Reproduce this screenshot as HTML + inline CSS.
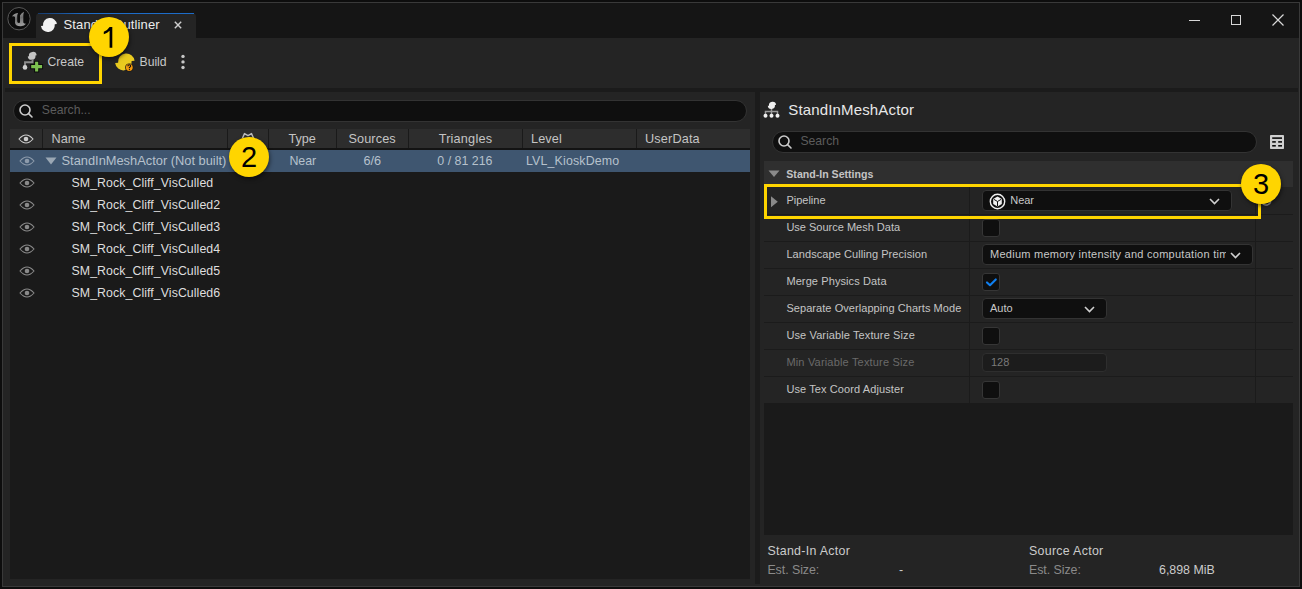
<!DOCTYPE html>
<html><head><meta charset="utf-8">
<style>
*{box-sizing:border-box;margin:0;padding:0}
html,body{width:1302px;height:589px;overflow:hidden;background:#0d0d0d;font-family:"Liberation Sans",sans-serif;color:#c0c0c0}
.a{position:absolute}
.t{position:absolute;white-space:nowrap;line-height:1}
.strip{position:absolute;background:#1b1b1b}
.search{position:absolute;background:#0f0f0f;border:1px solid #333333;border-radius:11px}
.hdr{position:absolute;top:129px;height:19px;background:#2d2d2d}
.hsep{position:absolute;top:129px;width:1px;height:19px;background:#1a1a1a}
.badge{position:absolute;width:40px;height:40px;border-radius:50%;background:#ffd500;color:#000;font-size:29px;text-align:center;line-height:41px;box-shadow:1px 2px 4px rgba(0,0,0,.5)}
.ybox{position:absolute;border:3px solid #ffd500}
.drow{position:absolute;left:764px;width:529px;height:27px;background:#242424}
.hl{position:absolute;left:764px;width:529px;height:1px;background:#1b1b1b}
.vsep{position:absolute;width:1px;background:#1b1b1b}
.cb{position:absolute;left:982px;width:18px;height:18px;background:#0f0f0f;border:1px solid #363636;border-radius:3px}
.combo{position:absolute;left:982px;height:21px;background:#0f0f0f;border:1px solid #333333;border-radius:4px}
</style></head><body>
<div class="a" style="left:2px;top:2px;width:1298px;height:585px;border:1px solid #393939;background:#242424"></div>
<div class="a" style="left:3px;top:3px;width:1296px;height:35px;background:#151515"></div>
<svg class="a" style="left:7px;top:6px" width="25" height="25" viewBox="0 0 25 25"><defs><linearGradient id="ug" x1="0" y1="0" x2="0.3" y2="1"><stop offset="0" stop-color="#a8a8a8"/><stop offset=".55" stop-color="#6e6e6e"/><stop offset="1" stop-color="#9a9a9a"/></linearGradient></defs><circle cx="12" cy="12.7" r="11.2" fill="#0b0b0b" stroke="#5a5a5a" stroke-width="1"/><path d="M5 10.5 Q6.5 7.5 10.5 7 L11 7.2 Q10 9 10.2 11 L10.2 15.5 Q10.5 17 12 17 L13 16.5 L13 9.5 Q14.5 7 17 5.8 Q16.3 8 16.3 10 L16.3 16.5 Q16.8 17.8 19 17.8 Q17.5 20 14 20.2 Q9 20.5 8 17 L8 11 Q7 10 5 10.5 Z" fill="url(#ug)"/></svg>
<div class="a" style="left:36px;top:13px;width:160px;height:25px;background:#242424;border-radius:4px 4px 0 0"></div>
<div class="a" style="left:38px;top:13px;width:156px;height:1px;background:linear-gradient(90deg,#173a6a,#1d6cc8 30%,#1d6cc8)"></div>
<svg class="a" style="left:0px;top:0px" width="70" height="40" viewBox="0 0 70 40"><path transform="rotate(-7 48.9 25.0)" d="M43.00 25.00 A6.95 6.95 0 0 1 56.90 25.00 L54.80 25.00 A6.95 6.95 0 0 1 40.90 25.00 Z" fill="#f2f2f2"/></svg>
<div class="t" style="left:63.5px;top:18.30px;font-size:13px;color:#ececec;letter-spacing:0.15px">StandIn Outliner</div>
<svg class="a" style="left:174px;top:20.5px" width="8" height="8" viewBox="0 0 8 8"><path d="M0.8 0.8 L7.2 7.2 M7.2 0.8 L0.8 7.2" stroke="#cfcfcf" stroke-width="1.4"/></svg>
<div class="a" style="left:1189px;top:20px;width:11px;height:1px;background:#d8d8d8"></div>
<div class="a" style="left:1231px;top:15px;width:10px;height:10px;border:1px solid #d8d8d8"></div>
<svg class="a" style="left:1272px;top:14px" width="12" height="12" viewBox="0 0 12 12"><path d="M0.5 0.5 L11.5 11.5 M11.5 0.5 L0.5 11.5" stroke="#d8d8d8" stroke-width="1.2"/></svg>
<div class="strip" style="left:5px;top:88px;width:1293px;height:4px"></div>
<svg class="a" style="left:22px;top:50px" width="23" height="24" viewBox="0 0 23 24"><path transform="rotate(-7 10.2 5.85)" d="M6.90 5.85 A3.9 3.9 0 0 1 14.70 5.85 L13.50 5.85 A3.9 3.9 0 0 1 5.70 5.85 Z" fill="#c4c4c4"/><path d="M10.5 9.5 L10.5 12.2 L3 12.2 L3 16.5" fill="none" stroke="#8c8c8c" stroke-width="1.9"/><circle cx="3" cy="17.4" r="2.3" fill="#d0d0d0"/><path d="M8.2 14.1 L12.1 14.1 L12.1 10.8 L17.2 10.8 L17.2 14.1 L21.1 14.1 L21.1 19.2 L17.2 19.2 L17.2 22.5 L12.1 22.5 L12.1 19.2 L8.2 19.2 Z" fill="#0b0b0b"/><path d="M9.2 15.1 L13.1 15.1 L13.1 11.8 L16.2 11.8 L16.2 15.1 L20.1 15.1 L20.1 18.2 L16.2 18.2 L16.2 21.5 L13.1 21.5 L13.1 18.2 L9.2 18.2 Z" fill="#7cc04f"/></svg>
<div class="t" style="left:47.5px;top:56.17px;font-size:12.2px;color:#c8c8c8;">Create</div>
<svg class="a" style="left:100px;top:45px" width="40" height="30" viewBox="100 45 40 30"><defs><linearGradient id="bg1" x1="0" y1="0" x2="1" y2="1"><stop offset="0" stop-color="#b89a10"/><stop offset=".3" stop-color="#e6c81e"/><stop offset="1" stop-color="#f0d023"/></linearGradient></defs><path transform="rotate(-7 124.85 61.9)" d="M118.05 61.90 A8.3 8.3 0 0 1 134.65 61.90 L131.65 61.90 A8.3 8.3 0 0 1 115.05 61.90 Z" fill="url(#bg1)"/><circle cx="129.3" cy="67.5" r="4.1" fill="#161616"/><circle cx="129.3" cy="67.5" r="3.4" fill="#f5980a"/><path d="M127.9 66.3 Q127.9 64.7 129.3 64.7 Q130.7 64.7 130.7 66 Q130.7 66.8 129.4 67.4 L129.4 68.3" fill="none" stroke="#111" stroke-width="1.1"/><circle cx="129.4" cy="69.6" r="0.65" fill="#111"/></svg>
<div class="t" style="left:139.5px;top:55.97px;font-size:12.2px;color:#c8c8c8;">Build</div>
<svg class="a" style="left:179px;top:53px" width="8" height="18" viewBox="0 0 8 18"><circle cx="4" cy="3.4" r="1.7" fill="#c8c8c8"/><circle cx="4" cy="8.9" r="1.7" fill="#c8c8c8"/><circle cx="4" cy="14.5" r="1.7" fill="#c8c8c8"/></svg>
<div class="search" style="left:13px;top:100px;width:734px;height:22px"></div>
<svg class="a" style="left:18px;top:103px" width="16" height="16" viewBox="0 0 16 16"><circle cx="7" cy="7" r="5" fill="none" stroke="#cccccc" stroke-width="1.6"/><path d="M10.6 10.6 L14 14" stroke="#cccccc" stroke-width="1.6" stroke-linecap="round"/></svg>
<div class="t" style="left:41.8px;top:104.07px;font-size:12.2px;color:#5c5c5c;">Search...</div>
<div class="hdr" style="left:10px;width:740px"></div>
<div class="hsep" style="left:42px"></div>
<div class="hsep" style="left:227px"></div>
<div class="hsep" style="left:268px"></div>
<div class="hsep" style="left:336px"></div>
<div class="hsep" style="left:408px"></div>
<div class="hsep" style="left:522px"></div>
<div class="hsep" style="left:636px"></div>
<div class="a" style="left:10px;top:148px;width:740px;height:2px;background:#131313"></div>
<svg class="a" style="left:18px;top:132.5px" width="16" height="12" viewBox="0 0 16 12"><path d="M1 6 Q8 -2 15 6 Q8 14 1 6 Z" fill="none" stroke="#cfcfcf" stroke-width="1.1"/><circle cx="8" cy="6" r="2.3" fill="#cfcfcf"/></svg>
<svg class="a" style="left:240px;top:131px" width="16" height="8" viewBox="0 0 16 8"><path d="M2.5 7 L4.5 2.6 L8 4.6 L11.5 2.6 L13.5 7" fill="none" stroke="#bdbdbd" stroke-width="1.4" stroke-linejoin="round"/></svg>
<div class="t" style="left:51.5px;top:133.25px;font-size:12.7px;color:#c4c4c4;">Name</div>
<div class="t" style="left:288.4px;top:133.25px;font-size:12.7px;color:#c4c4c4;">Type</div>
<div class="t" style="left:348.5px;top:133.25px;font-size:12.7px;color:#c4c4c4;letter-spacing:0.1px">Sources</div>
<div class="t" style="left:438.7px;top:133.25px;font-size:12.7px;color:#c4c4c4;letter-spacing:0.2px">Triangles</div>
<div class="t" style="left:531px;top:133.25px;font-size:12.7px;color:#c4c4c4;letter-spacing:0.1px">Level</div>
<div class="t" style="left:645px;top:133.25px;font-size:12.7px;color:#c4c4c4;letter-spacing:0.15px">UserData</div>
<div class="a" style="left:10px;top:150px;width:740px;height:429px;background:#1a1a1a"></div>
<div class="a" style="left:10px;top:150px;width:740px;height:22px;background:#3f5670"></div>
<svg class="a" style="left:19px;top:155px" width="16" height="12" viewBox="0 0 16 12"><path d="M1 6 Q8 -2 15 6 Q8 14 1 6 Z" fill="none" stroke="#8d9bab" stroke-width="1.1"/><circle cx="8" cy="6" r="2.3" fill="#8d9bab"/></svg>
<svg class="a" style="left:45px;top:157px" width="12" height="8" viewBox="0 0 12 8"><path d="M0.5 0.5 L11.5 0.5 L6 7.5 Z" fill="#9aa7b4"/></svg>
<div class="t" style="left:61.5px;top:154.62px;font-size:12.85px;color:#b6c1cc;">StandInMeshActor (Not built)</div>
<div class="t" style="left:289.4px;top:155.00px;font-size:12.4px;color:#b6c1cc;">Near</div>
<div class="t" style="left:363.5px;top:154.75px;font-size:12.7px;color:#b6c1cc;">6/6</div>
<div class="t" style="left:437.3px;top:155.00px;font-size:12.4px;color:#b6c1cc;">0 / 81 216</div>
<div class="t" style="left:526px;top:155.00px;font-size:12.4px;color:#b6c1cc;letter-spacing:0.15px">LVL_KioskDemo</div>
<svg class="a" style="left:19px;top:177px" width="16" height="12" viewBox="0 0 16 12"><path d="M1 6 Q8 -2 15 6 Q8 14 1 6 Z" fill="none" stroke="#8a8a8a" stroke-width="1.1"/><circle cx="8" cy="6" r="2.3" fill="#8a8a8a"/></svg>
<div class="t" style="left:71.5px;top:177.05px;font-size:12.35px;color:#dedede;letter-spacing:0.07px">SM_Rock_Cliff_VisCulled</div>
<svg class="a" style="left:19px;top:199px" width="16" height="12" viewBox="0 0 16 12"><path d="M1 6 Q8 -2 15 6 Q8 14 1 6 Z" fill="none" stroke="#8a8a8a" stroke-width="1.1"/><circle cx="8" cy="6" r="2.3" fill="#8a8a8a"/></svg>
<div class="t" style="left:71.5px;top:199.05px;font-size:12.35px;color:#dedede;letter-spacing:0.07px">SM_Rock_Cliff_VisCulled2</div>
<svg class="a" style="left:19px;top:221px" width="16" height="12" viewBox="0 0 16 12"><path d="M1 6 Q8 -2 15 6 Q8 14 1 6 Z" fill="none" stroke="#8a8a8a" stroke-width="1.1"/><circle cx="8" cy="6" r="2.3" fill="#8a8a8a"/></svg>
<div class="t" style="left:71.5px;top:221.05px;font-size:12.35px;color:#dedede;letter-spacing:0.07px">SM_Rock_Cliff_VisCulled3</div>
<svg class="a" style="left:19px;top:243px" width="16" height="12" viewBox="0 0 16 12"><path d="M1 6 Q8 -2 15 6 Q8 14 1 6 Z" fill="none" stroke="#8a8a8a" stroke-width="1.1"/><circle cx="8" cy="6" r="2.3" fill="#8a8a8a"/></svg>
<div class="t" style="left:71.5px;top:243.05px;font-size:12.35px;color:#dedede;letter-spacing:0.07px">SM_Rock_Cliff_VisCulled4</div>
<svg class="a" style="left:19px;top:265px" width="16" height="12" viewBox="0 0 16 12"><path d="M1 6 Q8 -2 15 6 Q8 14 1 6 Z" fill="none" stroke="#8a8a8a" stroke-width="1.1"/><circle cx="8" cy="6" r="2.3" fill="#8a8a8a"/></svg>
<div class="t" style="left:71.5px;top:265.05px;font-size:12.35px;color:#dedede;letter-spacing:0.07px">SM_Rock_Cliff_VisCulled5</div>
<svg class="a" style="left:19px;top:287px" width="16" height="12" viewBox="0 0 16 12"><path d="M1 6 Q8 -2 15 6 Q8 14 1 6 Z" fill="none" stroke="#8a8a8a" stroke-width="1.1"/><circle cx="8" cy="6" r="2.3" fill="#8a8a8a"/></svg>
<div class="t" style="left:71.5px;top:287.05px;font-size:12.35px;color:#dedede;letter-spacing:0.07px">SM_Rock_Cliff_VisCulled6</div>
<div class="strip" style="left:755px;top:92px;width:5px;height:492px"></div>
<svg class="a" style="left:763px;top:101px" width="17" height="18" viewBox="0 0 17 18"><path transform="rotate(-7 8.95 4.35)" d="M5.95 4.35 A3.6 3.6 0 0 1 13.15 4.35 L11.95 4.35 A3.6 3.6 0 0 1 4.75 4.35 Z" fill="#f0f0f0"/><path d="M8.5 8 L8.5 14 M2.5 14 L2.5 10.5 L14.5 10.5 L14.5 14" fill="none" stroke="#9a9a9a" stroke-width="1.5"/><circle cx="2.5" cy="14.8" r="2" fill="#f0f0f0"/><circle cx="8.5" cy="14.8" r="2" fill="#f0f0f0"/><circle cx="14.5" cy="14.8" r="2" fill="#f0f0f0"/></svg>
<div class="t" style="left:788.3px;top:101.60px;font-size:15px;color:#e8e8e8;letter-spacing:0.15px">StandInMeshActor</div>
<div class="search" style="left:772px;top:131px;width:485px;height:22px"></div>
<svg class="a" style="left:777px;top:134px" width="16" height="16" viewBox="0 0 16 16"><circle cx="7" cy="7" r="5" fill="none" stroke="#cccccc" stroke-width="1.6"/><path d="M10.6 10.6 L14 14" stroke="#cccccc" stroke-width="1.6" stroke-linecap="round"/></svg>
<div class="t" style="left:800.4px;top:135.27px;font-size:12.2px;color:#5c5c5c;">Search</div>
<svg class="a" style="left:1270px;top:135px" width="14" height="14" viewBox="0 0 14 14"><rect x="0" y="0" width="14" height="14" rx="0.8" fill="#d0d0d0"/><rect x="2.2" y="2.3" width="9.8" height="1.6" fill="#0c0c0c"/><rect x="2.2" y="6.1" width="3.6" height="1.6" fill="#0c0c0c"/><rect x="8.2" y="6.1" width="3.8" height="1.6" fill="#0c0c0c"/><rect x="2.2" y="10" width="3.6" height="1.6" fill="#0c0c0c"/><rect x="8.2" y="10" width="3.8" height="1.6" fill="#0c0c0c"/></svg>
<div class="a" style="left:764px;top:161px;width:529px;height:26px;background:#2f2f2f"></div>
<svg class="a" style="left:768px;top:170px" width="12" height="8" viewBox="0 0 12 8"><path d="M0.5 0.5 L11.5 0.5 L6 7 Z" fill="#8a8a8a"/></svg>
<div class="t" style="left:786.3px;top:168.63px;font-size:10.6px;color:#c4c4c4;font-weight:bold">Stand-In Settings</div>
<div class="drow" style="top:187px"></div>
<div class="drow" style="top:214px"></div>
<div class="drow" style="top:241px"></div>
<div class="drow" style="top:268px"></div>
<div class="drow" style="top:295px"></div>
<div class="drow" style="top:322px"></div>
<div class="drow" style="top:349px"></div>
<div class="drow" style="top:376px"></div>
<div class="hl" style="top:214px"></div>
<div class="hl" style="top:241px"></div>
<div class="hl" style="top:268px"></div>
<div class="hl" style="top:295px"></div>
<div class="hl" style="top:322px"></div>
<div class="hl" style="top:349px"></div>
<div class="hl" style="top:376px"></div>
<div class="hl" style="top:403px"></div>
<div class="vsep" style="left:969px;top:187px;height:216px"></div>
<div class="vsep" style="left:1255px;top:187px;height:216px"></div>
<div class="t" style="left:786.4px;top:195.49px;font-size:11px;color:#c4c4c4;letter-spacing:0px">Pipeline</div>
<svg class="a" style="left:771px;top:195.5px" width="8" height="12" viewBox="0 0 8 12"><path d="M0 0.3 L6.8 5.8 L0 11.3 Z" fill="#8a8a8a"/></svg>
<div class="combo" style="top:190px;width:250px"></div>
<svg class="a" style="left:989px;top:192.5px" width="17" height="17" viewBox="0 0 17 17"><circle cx="8.5" cy="8.5" r="7.2" fill="none" stroke="#f0f0f0" stroke-width="1.4"/><path d="M8.5 3.5 L12.8 6 L12.8 11 L8.5 13.5 L4.2 11 L4.2 6 Z" fill="#f0f0f0"/><path d="M4.8 6.3 L8.5 8.5 L12.2 6.3 M8.5 8.5 L8.5 13" fill="none" stroke="#0f0f0f" stroke-width="1"/></svg>
<div class="t" style="left:1010.2px;top:195.49px;font-size:11px;color:#c8c8c8;">Near</div>
<svg class="a" style="left:1209px;top:198px" width="11" height="7" viewBox="0 0 11 7"><path d="M1 1 L5.5 5.5 L10 1" fill="none" stroke="#d0d0d0" stroke-width="1.6"/></svg>
<div class="t" style="left:786.4px;top:222.49px;font-size:11px;color:#c4c4c4;letter-spacing:0px">Use Source Mesh Data</div>
<div class="cb" style="top:219px"></div>
<div class="t" style="left:786.4px;top:249.49px;font-size:11px;color:#c4c4c4;letter-spacing:0.07px">Landscape Culling Precision</div>
<div class="combo" style="top:244px;width:271px;overflow:hidden"></div>
<div class="a" style="left:990px;top:241px;width:236px;height:27px;overflow:hidden"><div class="t" style="left:0px;top:8.49px;font-size:11px;color:#c8c8c8;letter-spacing:0.26px">Medium memory intensity and computation time</div>
</div>
<svg class="a" style="left:1230px;top:252px" width="11" height="7" viewBox="0 0 11 7"><path d="M1 1 L5.5 5.5 L10 1" fill="none" stroke="#d0d0d0" stroke-width="1.6"/></svg>
<div class="t" style="left:786.4px;top:276.49px;font-size:11px;color:#c4c4c4;letter-spacing:0.1px">Merge Physics Data</div>
<div class="cb" style="top:273px"></div>
<svg class="a" style="left:985px;top:277px" width="13" height="11" viewBox="0 0 13 11"><path d="M2 5.4 L5 8.2 L10.8 2.4" fill="none" stroke="#0f7ff0" stroke-width="2.1" stroke-linecap="round" stroke-linejoin="round"/></svg>
<div class="t" style="left:786.4px;top:303.49px;font-size:11px;color:#c4c4c4;letter-spacing:0.06px">Separate Overlapping Charts Mode</div>
<div class="combo" style="top:298px;width:125px"></div>
<div class="t" style="left:990px;top:303.49px;font-size:11px;color:#c8c8c8;">Auto</div>
<svg class="a" style="left:1084px;top:306px" width="11" height="7" viewBox="0 0 11 7"><path d="M1 1 L5.5 5.5 L10 1" fill="none" stroke="#d0d0d0" stroke-width="1.6"/></svg>
<div class="t" style="left:786.4px;top:330.49px;font-size:11px;color:#c4c4c4;letter-spacing:0.12px">Use Variable Texture Size</div>
<div class="cb" style="top:327px"></div>
<div class="t" style="left:786.4px;top:357.49px;font-size:11px;color:#6a6a6a;letter-spacing:0.18px">Min Variable Texture Size</div>
<div class="a" style="left:982px;top:353px;width:125px;height:19px;background:#1c1c1c;border:1px solid #2e2e2e;border-radius:4px"></div>
<div class="t" style="left:991px;top:357.49px;font-size:11px;color:#7a7a7a;">128</div>
<div class="t" style="left:786.4px;top:384.49px;font-size:11px;color:#c4c4c4;letter-spacing:0.1px">Use Tex Coord Adjuster</div>
<div class="cb" style="top:381px"></div>
<div class="a" style="left:764px;top:403px;width:529px;height:132px;background:#1a1a1a"></div>
<div class="t" style="left:767.4px;top:544.90px;font-size:12.4px;color:#cbcbcb;letter-spacing:0.3px">Stand-In Actor</div>
<div class="t" style="left:767.4px;top:564.10px;font-size:12.4px;color:#8a8a8a;letter-spacing:-0.05px">Est. Size:</div>
<div class="t" style="left:899px;top:564.10px;font-size:12.4px;color:#cbcbcb;">-</div>
<div class="t" style="left:1029px;top:544.90px;font-size:12.4px;color:#cbcbcb;letter-spacing:0.3px">Source Actor</div>
<div class="t" style="left:1029px;top:564.10px;font-size:12.4px;color:#8a8a8a;letter-spacing:-0.05px">Est. Size:</div>
<div class="t" style="left:1159px;top:564.10px;font-size:12.4px;color:#cbcbcb;">6,898 MiB</div>
<svg class="a" style="left:1258px;top:193px" width="16" height="16" viewBox="0 0 16 16"><path d="M3 7.5 A5 5 0 1 0 11.5 3.5" fill="none" stroke="#9a9a9a" stroke-width="1.5"/></svg>
<div class="ybox" style="left:9px;top:43px;width:93px;height:41px"></div>
<div class="ybox" style="left:764px;top:184px;width:497px;height:35px"></div>
<div class="badge" style="left:89px;top:17px"></div>
<svg class="a" style="left:89px;top:17px" width="40" height="40" viewBox="0 0 40 40"><path d="M20.6 9.9 L23.3 9.9 L23.3 30.7 L20.6 30.7 L20.6 13.8 Q18.6 15.8 14.8 17.3 L14.8 14.8 Q18.5 13.2 20.6 9.9 Z" fill="#000"/></svg>
<div class="badge" style="left:229px;top:137px">2</div>
<div class="badge" style="left:1241px;top:164px">3</div>
</body></html>
